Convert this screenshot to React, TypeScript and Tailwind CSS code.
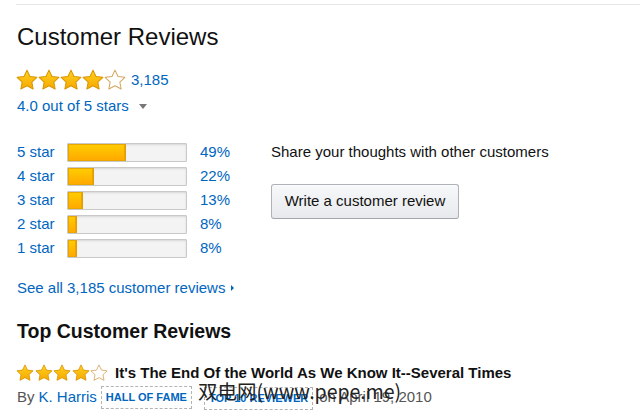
import React from 'react'

const histogram = [
  { label: '5 star', pct: 49 },
  { label: '4 star', pct: 22 },
  { label: '3 star', pct: 13 },
  { label: '2 star', pct: 8 },
  { label: '1 star', pct: 8 },
]

const STAR = 'M12 1.2l3.3 6.9 7.5 1-5.5 5.2 1.4 7.5L12 18.2l-6.7 3.6 1.4-7.5L1.2 9.1l7.5-1z'

function Star({ filled, size }: { filled: boolean; size: number }) {
  return (
    <svg width={size} height={size} viewBox="0 0 24 24" className="shrink-0">
      <defs>
        <linearGradient id="starFill" x1="0" y1="0" x2="0" y2="1">
          <stop offset="0" stopColor="#ffd21f" />
          <stop offset="1" stopColor="#f7a800" />
        </linearGradient>
      </defs>
      <path
        d={STAR}
        fill={filled ? 'url(#starFill)' : '#fff'}
        stroke={filled ? '#d99400' : '#d4a55c'}
        strokeWidth="1.1"
        strokeLinejoin="round"
      />
    </svg>
  )
}

function Stars({ count, size, pitch }: { count: number; size: number; pitch: string }) {
  return (
    <div className={`flex items-center ${pitch}`}>
      {[0, 1, 2, 3, 4].map((i) => (
        <Star key={i} filled={i < count} size={size} />
      ))}
    </div>
  )
}

function Badge({ children }: { children: React.ReactNode }) {
  return (
    <span className="inline-flex items-center h-[23px] px-[4px] border border-dashed border-[#b3b3b3] text-[11px] font-bold text-[#0066c0] leading-none">
      {children}
    </span>
  )
}

export default function App() {
  return (
    <div className="relative w-[640px] h-[416px] overflow-hidden bg-white text-[#111] font-['Liberation_Sans',Arial,sans-serif]">
      <div className="ml-4 mt-[4px] border-t border-[#e7e7e7]" />

      <div className="pl-4">
        {/* Header */}
        <h2 className="mt-[18px] text-[24px] leading-[28px] font-normal pl-[1px]">Customer Reviews</h2>

        <div className="mt-[18px] flex items-center h-[22px]">
          <Stars count={4} size={22} pitch="gap-0" />
          <a className="ml-[5px] text-[15px] text-[#0066c0]">3,185</a>
        </div>

        <div className="mt-[5px] flex items-center h-[20px] pl-[1px]">
          <span className="text-[15px] text-[#0066c0]">4.0 out of 5 stars</span>
          <span className="ml-[10px] mt-[1px] w-0 h-0 border-x-[4px] border-x-transparent border-t-[5px] border-t-[#777]" />
        </div>

        {/* Histogram + write review */}
        <div className="mt-[27px] flex">
          <div className="w-[255px] flex flex-col gap-[5px]">
            {histogram.map((row) => (
              <div key={row.label} className="flex items-center h-[19px]">
                <span className="w-[51px] pl-[1px] text-[15px] text-[#0066c0]">{row.label}</span>
                <div className="w-[120px] h-[19px] rounded-[1px] border border-[#c9c9c9] bg-[#f3f3f3] shadow-[inset_0_1px_2px_rgba(0,0,0,0.12)] overflow-hidden flex">
                  <div
                    className="h-full bg-gradient-to-b from-[#ffce00] to-[#ffa700] border-r border-[#e39d00] shadow-[inset_0_0_0_1px_#e8a600]"
                    style={{ width: `${row.pct}%` }}
                  />
                </div>
                <span className="ml-[13px] text-[15px] text-[#0066c0]">{row.pct}%</span>
              </div>
            ))}
          </div>

          <div className="flex flex-col items-start">
            <p className="h-[19px] flex items-center text-[15px] text-[#111]">Share your thoughts with other customers</p>
            <button className="mt-[22px] w-[188px] h-[35px] rounded-[3px] border border-[#adb1b8] border-b-[#a2a6ac] bg-gradient-to-b from-[#f7f8fa] to-[#e7e9ec] shadow-[0_1px_0_rgba(255,255,255,0.6)_inset] text-[15px] text-[#111]">
              Write a customer review
            </button>
          </div>
        </div>

        <div className="mt-[20px] flex items-center h-[20px] pl-[1px]">
          <span className="text-[15px] text-[#0066c0]">See all 3,185 customer reviews</span>
          <span className="ml-[6px] w-0 h-0 border-y-[3px] border-y-transparent border-l-[3px] border-l-[#0066c0]" />
        </div>

        {/* Top reviews */}
        <h3 className="mt-[21px] text-[19.5px] leading-[24px] font-bold pl-[1px]">Top Customer Reviews</h3>

        <div className="mt-[20px] flex items-center h-[20px]">
          <Stars count={4} size={18} pitch="gap-[0.5px]" />
          <span className="ml-[7px] text-[15px] font-bold text-[#111]">
            It's The End Of the World As We Know It--Several Times
          </span>
        </div>

        <div className="mt-[3px] flex items-center h-[23px] pl-[1px] text-[15px]">
          <span className="text-[#555]">By</span>
          <a className="ml-[4px] text-[#0066c0]">K. Harris</a>
          <span className="ml-[4px] flex">
            <Badge>HALL OF FAME</Badge>
            <span className="ml-[12px]">
              <Badge>TOP 10 REVIEWER</Badge>
            </span>
          </span>
          <span className="ml-[6px] text-[#555]">on April 19, 2010</span>
        </div>
      </div>

      {/* watermark */}
      <span className="absolute left-[198px] top-[379px] text-[19.5px] leading-[24px] text-[#222] font-['Noto_Sans_CJK_SC','Liberation_Sans',sans-serif]">
        双电网(www.pepe.me)
      </span>
    </div>
  )
}
